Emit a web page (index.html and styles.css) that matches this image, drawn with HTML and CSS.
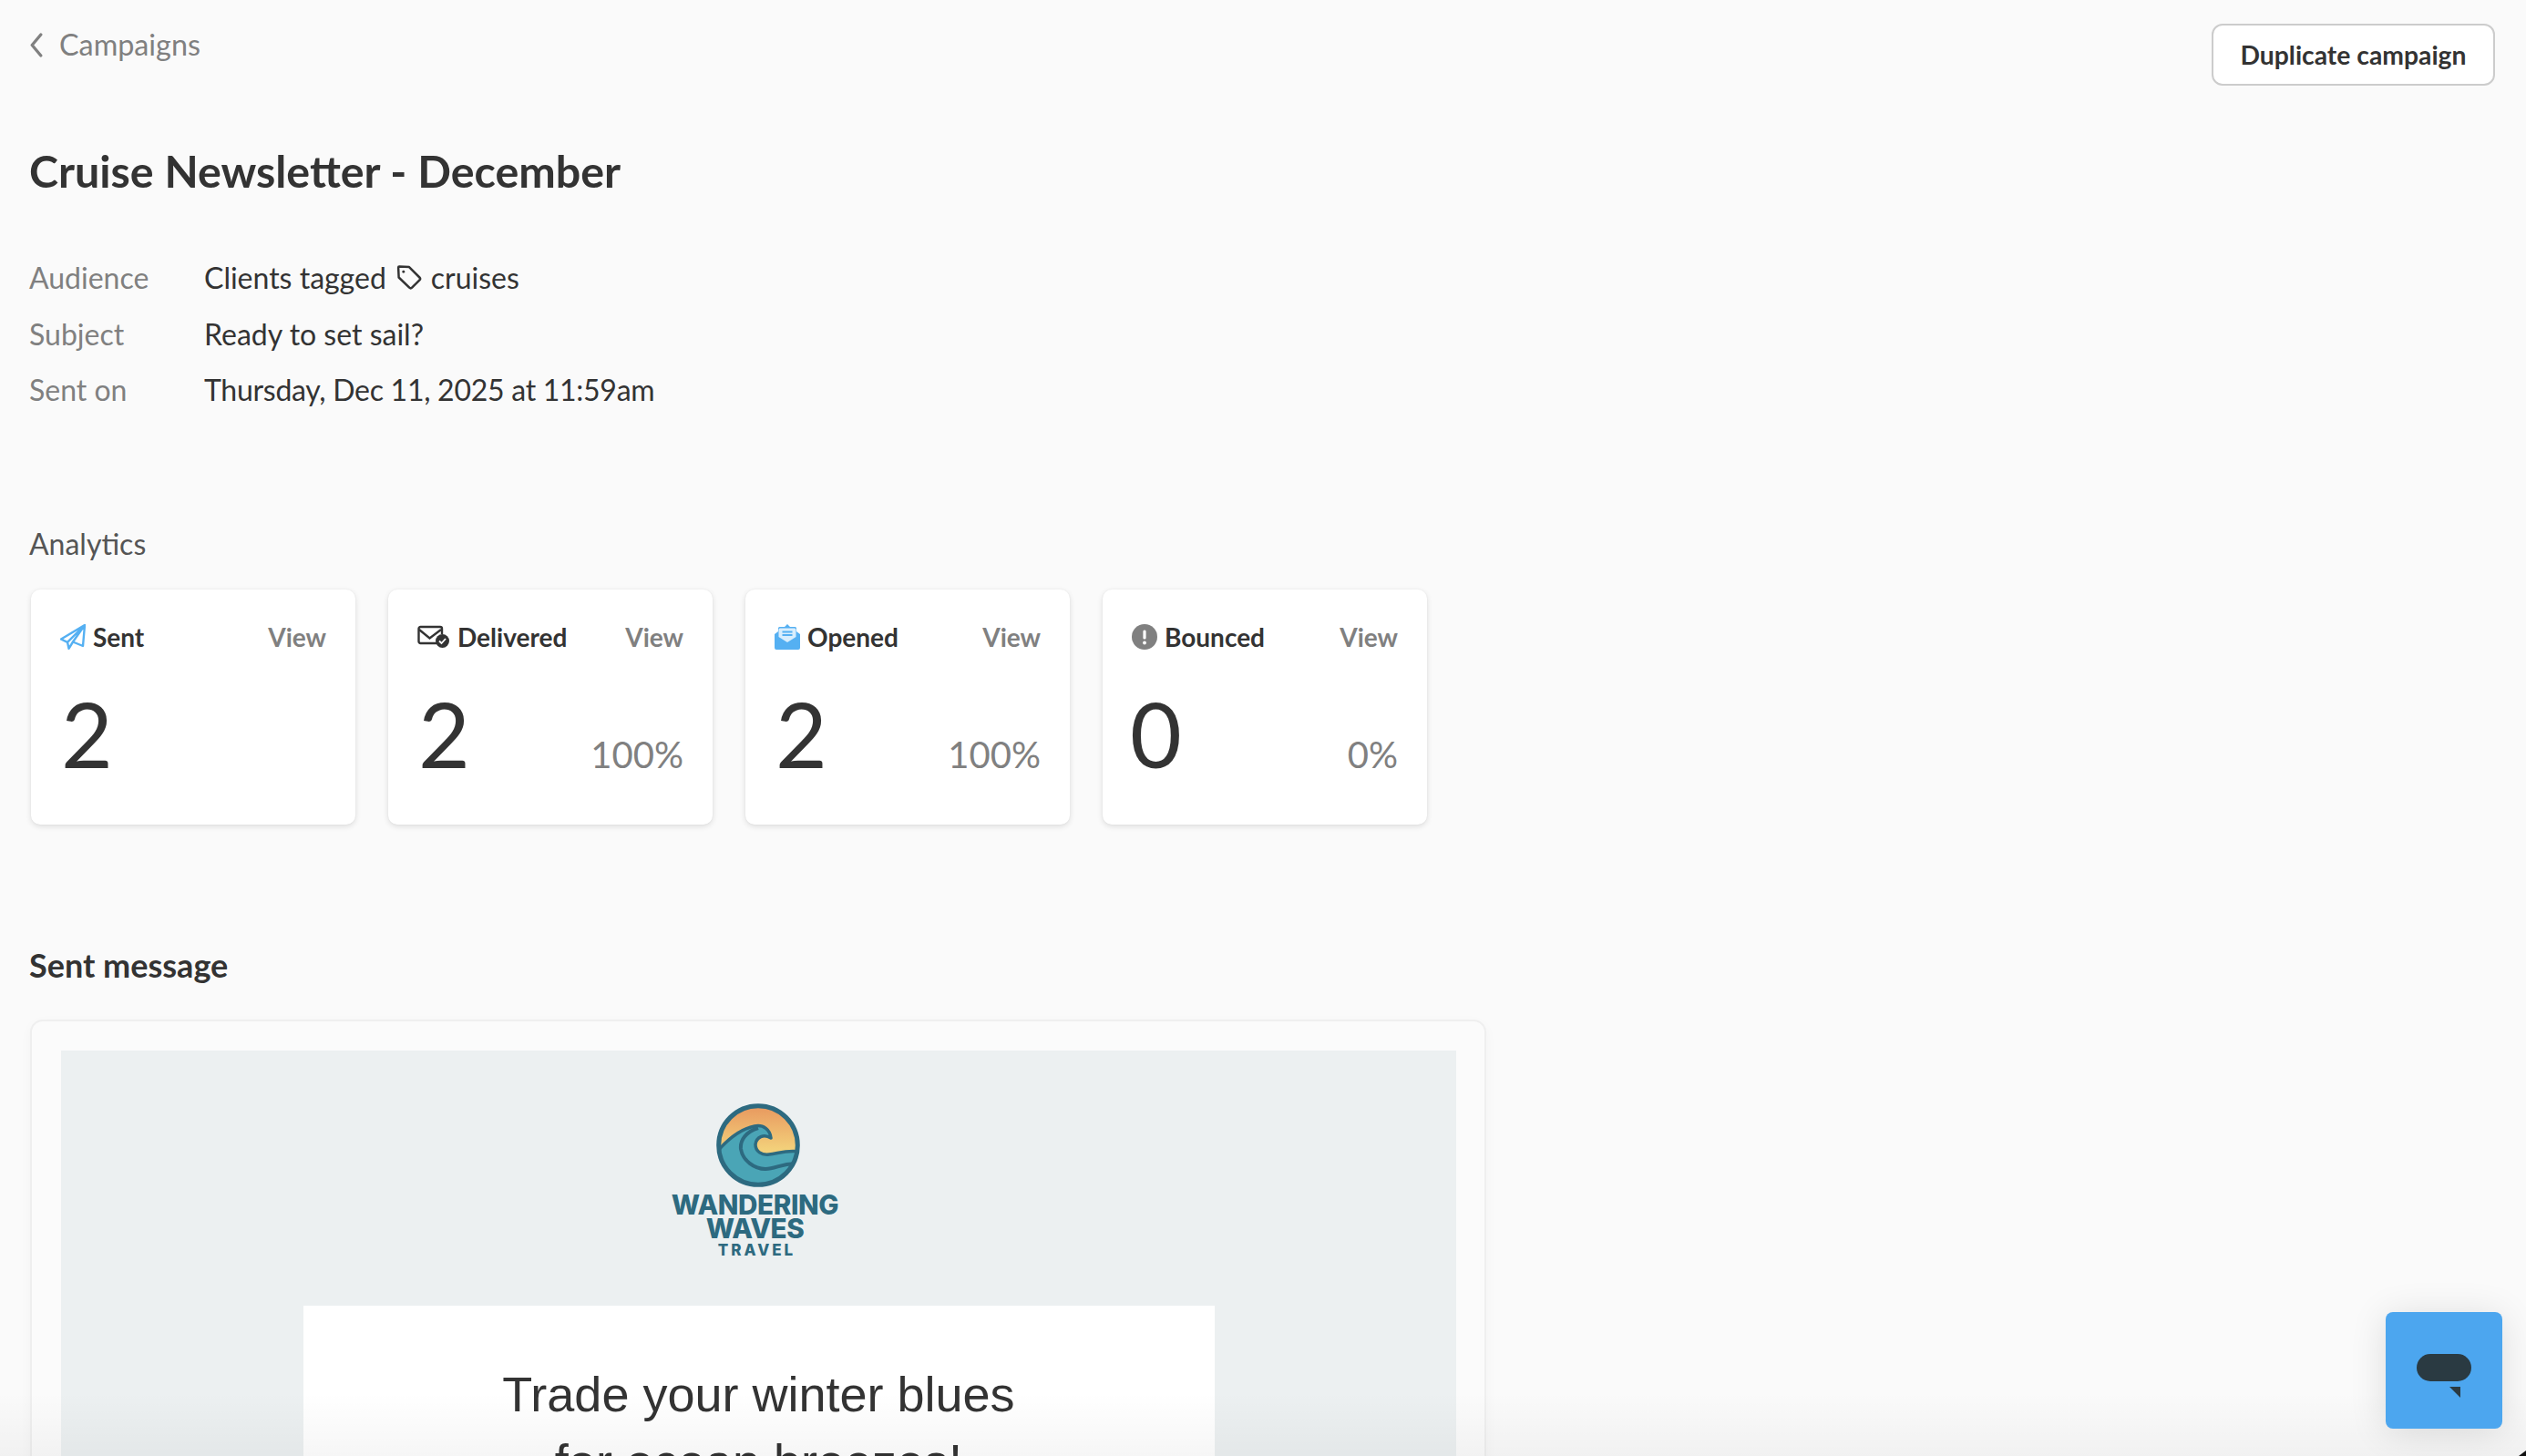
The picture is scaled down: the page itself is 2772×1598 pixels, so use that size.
FILE: index.html
```html
<!DOCTYPE html>
<html lang="en">
<head>
<meta charset="utf-8">
<title>Cruise Newsletter - December</title>
<link rel="stylesheet" href="styles.css">
</head>
<body>
<main class="page">
  <header class="topbar">
    <a class="back">
      <svg class="back-icon" viewBox="0 0 16 28"><path d="M13 2 3 14l10 12" fill="none" stroke="#808080" stroke-width="3.400" stroke-linecap="round" stroke-linejoin="round"/></svg>
      <span>Campaigns</span>
    </a>
    <button class="dup">Duplicate campaign</button>
  </header>

  <h1 class="title">Cruise Newsletter - December</h1>

  <dl class="meta">
    <div class="meta-row"><dt>Audience</dt><dd>Clients tagged
      <svg class="tag" viewBox="0 0 28 28"><path d="M3 3.500a1 1 0 0 1 1-1l10.500 .5 11 11a2 2 0 0 1 0 2.800l-8 8a2 2 0 0 1-2.800 0L3.500 14z" fill="none" stroke="#333" stroke-width="2.400" stroke-linejoin="round"/><circle cx="8.500" cy="8" r="1.400" fill="#333"/></svg>
      cruises</dd></div>
    <div class="meta-row"><dt>Subject</dt><dd>Ready to set sail?</dd></div>
    <div class="meta-row"><dt>Sent on</dt><dd class="date">Thursday, Dec 11, 2025 at 11:59am</dd></div>
  </dl>

  <h2 class="analytics-title">Analytics</h2>

  <section class="cards">
    <article class="card">
      <div class="card-head">
        <span class="card-label">
          <svg class="ico ico-sent" viewBox="0 0 28 28"><path d="M27 1 1 16.500l7 3.300zM27 1 25 24 14 19.500zM27 1 8 19.800l1.500 7 4.500-7.300" fill="none" stroke="#55b0f2" stroke-width="2.400" stroke-linejoin="round"/></svg>
          Sent</span>
        <a class="view">View</a>
      </div>
      <div class="card-body"><span class="num">2</span></div>
    </article>
    <article class="card">
      <div class="card-head">
        <span class="card-label">
          <svg class="ico ico-del" viewBox="0 0 36 28"><path d="M25 21H3.500A2 2 0 0 1 1.500 19V5A2 2 0 0 1 3.500 3H25a2 2 0 0 1 2 2v6" fill="none" stroke="#333" stroke-width="2.400"/><path d="M2 6l11.500 9.500L26 6" fill="none" stroke="#333" stroke-width="2.400"/><circle cx="27.500" cy="18.500" r="7.500" fill="#333"/><path d="M24 18.500l2.500 2.500 4.500-5" fill="none" stroke="#fff" stroke-width="1.800"/></svg>
          Delivered</span>
        <a class="view">View</a>
      </div>
      <div class="card-body"><span class="num">2</span><span class="pct">100%</span></div>
    </article>
    <article class="card">
      <div class="card-head">
        <span class="card-label">
          <svg class="ico ico-open" viewBox="0 0 28 28"><path d="M0 11 4 8V4.500A1.500 1.500 0 0 1 5.500 3H11L14 0l3 3h5.500A1.500 1.500 0 0 1 24 4.500V8l4 3v15a2 2 0 0 1-2 2H2a2 2 0 0 1-2-2z" fill="#55b0f2"/><path d="M4.500 14V6a1.500 1.500 0 0 1 1.500-1.500h16A1.500 1.500 0 0 1 23.500 6v8L14 20z" fill="#d9eefd"/><path d="M8.500 8.500h11M8.500 12h11" stroke="#55b0f2" stroke-width="2"/></svg>
          Opened</span>
        <a class="view">View</a>
      </div>
      <div class="card-body"><span class="num">2</span><span class="pct">100%</span></div>
    </article>
    <article class="card">
      <div class="card-head">
        <span class="card-label">
          <svg class="ico ico-bounce" viewBox="0 0 28 28"><circle cx="14" cy="14" r="14" fill="#808080"/><rect x="12.400" y="6.500" width="3.200" height="10" rx="1.500" fill="#fff"/><circle cx="14" cy="20.500" r="1.900" fill="#fff"/></svg>
          Bounced</span>
        <a class="view">View</a>
      </div>
      <div class="card-body"><span class="num num-zero">0</span><span class="pct">0%</span></div>
    </article>
  </section>

  <h2 class="sent-title">Sent message</h2>

  <section class="message">
    <div class="email">
      <div class="logo">
        <svg class="logo-mark" viewBox="0 0 92 92">
          <defs>
            <linearGradient id="sky" x1="0" y1="0" x2="0" y2="1">
              <stop offset="0" stop-color="#e8985f"/>
              <stop offset=".55" stop-color="#f3d07a"/>
              <stop offset="1" stop-color="#f4d67e"/>
            </linearGradient>
            <clipPath id="disc"><circle cx="46" cy="46" r="43"/></clipPath>
          </defs>
          <circle cx="46" cy="46" r="43" fill="url(#sky)"/>
          <g clip-path="url(#disc)">
            <path d="M0 54 C12 40 26 28 42 25 C52 23 59 29 60 38 C52 33 44 37 43 45 C43 53 50 57 58 56 C68 55 76 51 92 53 V92 H0Z" fill="#4aa5b6" stroke="#2d6a80" stroke-width="3.500" stroke-linejoin="round"/>
            <path d="M46 27 C33 31 26 40 27 50 C29 63 42 72 54 72 C66 72 72 65 92 66" fill="none" stroke="#2d6a80" stroke-width="4"/>
          </g>
          <circle cx="46" cy="46" r="43.300" fill="none" stroke="#2d6a80" stroke-width="5"/>
        </svg>
        <div class="logo-name">WANDERING<br>WAVES</div>
        <div class="logo-sub">TRAVEL</div>
      </div>
      <div class="email-body">
        <h3 class="email-head">Trade your winter blues<br>for ocean breezes!</h3>
      </div>
    </div>
  </section>
</main>

<div class="fade"></div>
<button class="chat" aria-label="Chat">
  <svg class="chat-icon" viewBox="0 0 60 48"><rect x="0" y="0" width="60" height="30" rx="15" fill="#2a3a42"/><path d="M36 36h12v12z" fill="#2a3a42"/></svg>
</button>
<div class="corner"></div>
</body>
</html>
```

FILE: styles.css
```css
* { box-sizing: border-box; }
html, body { margin: 0; height: 100%; }
body {
  background: #fafafa;
  color: #333;
  font-family: Lato, "Liberation Sans", sans-serif;
  overflow: hidden;
  position: relative;
}
.page { padding: 26px 34px 0 32px; }

.topbar { display: flex; justify-content: space-between; align-items: flex-start; }
.back { display: flex; align-items: center; gap: 17px; color: #808080; font-size: 32.300px; line-height: 48px; margin-top: -1px; }
.back-icon { width: 16px; height: 27px; }
.dup {
  width: 311px; height: 68px;
  background: #fff;
  border: 2px solid #ccc;
  border-radius: 12px;
  color: #333;
  font: 700 28.300px Lato, sans-serif;
}

.title { font-size: 48.400px; font-weight: 700; line-height: 60px; margin: 63px 0 0; color: #333; }

.meta { margin: 57px 0 0; font-size: 32px; }
.meta-row { display: flex; line-height: 61.500px; }
.meta dt { width: 192px; color: #808080; }
.meta dd { margin: 0; color: #333; display: flex; align-items: center; gap: 10px; }
.meta .date { letter-spacing: -.27px; }
.tag { width: 29px; height: 29px; }

.analytics-title { font-size: 32px; font-weight: 400; line-height: 48px; margin: 114px 0 0; color: #555; }

.cards { display: flex; gap: 36px; margin-top: 26px; padding-left: 2px; }
.card {
  width: 356px; height: 258px;
  background: #fff;
  border-radius: 10px;
  box-shadow: 0 2px 6px rgba(0,0,0,.12), 0 0 2px rgba(0,0,0,.06);
  padding: 34px 32px 0 32px;
}
.card-head { display: flex; justify-content: space-between; align-items: center; line-height: 36px; font-size: 28px; font-weight: 700; }
.card-label { display: flex; align-items: center; gap: 8px; color: #333; }
.view { color: #808080; }
.ico { height: 28px; width: 28px; flex: none; }
.ico-del { width: 36px; }
.card-body { display: flex; justify-content: space-between; align-items: baseline; margin-top: 30px; }
.num { font-size: 98px; line-height: 116px; color: #333; margin-left: 1px; }
.num-zero { margin-left: -2px; }
.pct { font-size: 40px; color: #808080; }

.sent-title { font-size: 36px; font-weight: 700; line-height: 48px; margin: 130px 0 0; color: #333; }

.message {
  width: 1598px;
  margin: 36px 0 0 1px;
  padding: 32px 31px 32px 32px;
  background: #fbfbfb;
  border: 2px solid #efefef;
  border-radius: 14px;
  box-shadow: 0 4px 14px rgba(0,0,0,.03);
}
.email { background: #ecf0f1; height: 500px; display: flex; flex-direction: column; align-items: center; padding-top: 58px; }
.logo { display: flex; flex-direction: column; align-items: center; color: #2d6a80; }
.logo-mark { width: 92px; height: 92px; }
.logo-name { font: 800 29.600px/26px Inter, sans-serif; text-align: center; margin: 6px 8px 0 0; letter-spacing: -.4px; }
.logo-sub { font: 800 17px/22px Inter, sans-serif; letter-spacing: 3px; margin: 0 4px 0 0; }
.email-body { width: 1000px; height: 300px; background: #fff; margin-top: 50px; padding-top: 60px; }
.email-head { font: 400 54px/74px "Liberation Sans", Arial, sans-serif; text-align: center; color: #333; margin: 0; }

.fade {
  position: absolute; left: 0; right: 0; bottom: 0; height: 70px;
  background: linear-gradient(to bottom, rgba(0,0,0,0), rgba(0,0,0,.035));
  pointer-events: none;
}
.chat {
  position: absolute; right: 26px; bottom: 30px;
  width: 128px; height: 128px;
  border: 0; border-radius: 8px;
  background: #4ca6ef;
  box-shadow: 0 4px 40px rgba(0,0,0,.12);
  display: flex; align-items: flex-start; justify-content: center;
  padding: 46px 0 0;
}
.chat-icon { width: 60px; height: 48px; }
.corner {
  position: absolute; right: 0; bottom: 0;
  width: 8px; height: 6px;
  background: #111;
  clip-path: polygon(100% 0, 100% 100%, 0 100%);
}
```
